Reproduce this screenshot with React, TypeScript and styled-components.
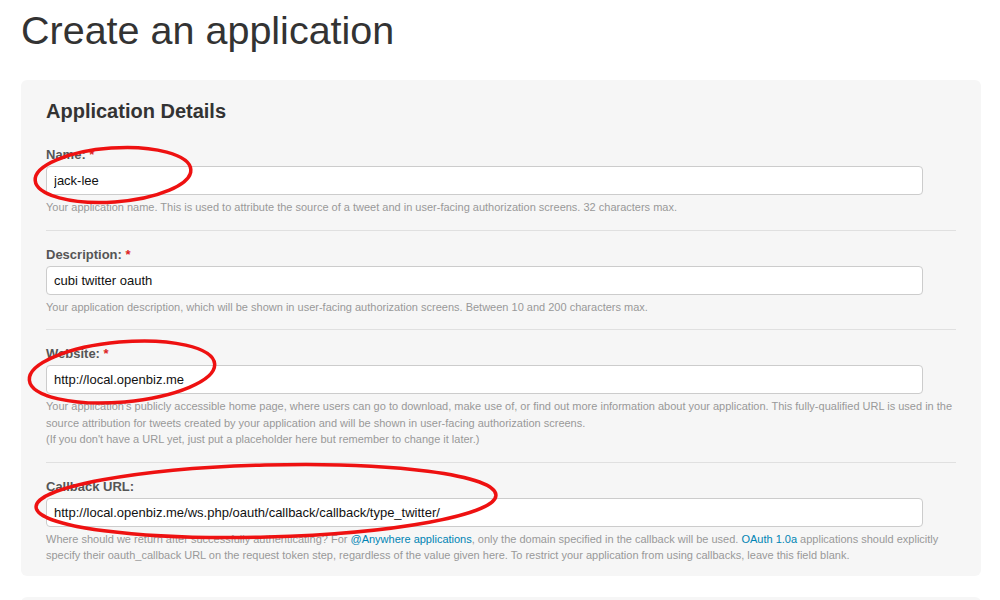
import styled, { createGlobalStyle } from "styled-components";

const GlobalStyle = createGlobalStyle`
  html, body {
    margin: 0;
    padding: 0;
    background: #ffffff;
    font-family: "Liberation Sans", Arial, sans-serif;
  }
`;

const Page = styled.div`
  position: relative;
  width: 1000px;
  height: 600px;
  overflow: hidden;
  padding: 0 19px 0 21px;
  box-sizing: border-box;
`;

const Title = styled.h1`
  margin: 8px 0 28px 0;
  font-size: 39.5px;
  line-height: 44px;
  font-weight: normal;
  color: #333333;
`;

const Panel = styled.div`
  background: #f6f6f6;
  border-radius: 6px;
  padding: 19px 25px 12px 25px;
  margin-bottom: 21px;
`;

const PanelTitle = styled.h2`
  margin: 0 0 23px 0;
  font-size: 20px;
  line-height: 24px;
  font-weight: bold;
  color: #333333;
`;

const Field = styled.div<{ $last?: boolean }>`
  padding-bottom: ${(p) => (p.$last ? "0" : "14px")};
  margin-bottom: ${(p) => (p.$last ? "0" : "15px")};
  border-bottom: ${(p) => (p.$last ? "none" : "1px solid #e0e0e0")};
`;

const Label = styled.label`
  display: block;
  margin-bottom: 2px;
  font-size: 13px;
  line-height: 18px;
  font-weight: bold;
  color: #555555;
`;

const Required = styled.span`
  color: #dd2222;
`;

const TextInput = styled.input`
  display: block;
  width: 877px;
  height: 29px;
  box-sizing: border-box;
  margin: 0;
  padding: 0 7px;
  border: 1px solid #cccccc;
  border-radius: 4px;
  background: #ffffff;
  font-family: "Liberation Sans", Arial, sans-serif;
  font-size: 13px;
  color: #111111;
  outline: none;
`;

const Help = styled.p`
  margin: 4px 0 0 0;
  font-size: 11px;
  line-height: 16.5px;
  color: #999999;
`;

const Link = styled.a`
  color: #0084b4;
  text-decoration: none;
`;

const NextPanel = styled.div`
  background: #f6f6f6;
  border-radius: 6px;
  height: 80px;
`;

const Annotations = styled.svg`
  position: absolute;
  left: 0;
  top: 0;
  width: 1000px;
  height: 600px;
  pointer-events: none;
`;

type Mark = { cx: number; cy: number; rx: number; ry: number; angle: number };

const marks: Mark[] = [
  { cx: 113, cy: 175, rx: 78, ry: 27, angle: -4 },
  { cx: 122, cy: 372, rx: 93, ry: 30, angle: -5 },
  { cx: 266, cy: 501, rx: 230, ry: 36, angle: -1.5 },
];

export default function App() {
  return (
    <Page>
      <GlobalStyle />
      <Title>Create an application</Title>
      <Panel>
        <PanelTitle>Application Details</PanelTitle>
        <Field>
          <Label>
            Name: <Required>*</Required>
          </Label>
          <TextInput defaultValue="jack-lee" />
          <Help>
            Your application name. This is used to attribute the source of a tweet and in user-facing
            authorization screens. 32 characters max.
          </Help>
        </Field>
        <Field>
          <Label>
            Description: <Required>*</Required>
          </Label>
          <TextInput defaultValue="cubi twitter oauth" />
          <Help>
            Your application description, which will be shown in user-facing authorization screens.
            Between 10 and 200 characters max.
          </Help>
        </Field>
        <Field>
          <Label>
            Website: <Required>*</Required>
          </Label>
          <TextInput defaultValue="http://local.openbiz.me" />
          <Help>
            Your application's publicly accessible home page, where users can go to download, make use
            of, or find out more information about your application. This fully-qualified URL is used in
            the source attribution for tweets created by your application and will be shown in
            user-facing authorization screens.
            <br />
            (If you don't have a URL yet, just put a placeholder here but remember to change it later.)
          </Help>
        </Field>
        <Field $last>
          <Label>Callback URL:</Label>
          <TextInput defaultValue="http://local.openbiz.me/ws.php/oauth/callback/callback/type_twitter/" />
          <Help>
            Where should we return after successfully authenticating? For{" "}
            <Link href="#">@Anywhere applications</Link>, only the domain specified in the callback will
            be used. <Link href="#">OAuth 1.0a</Link> applications should explicitly specify their
            oauth_callback URL on the request token step, regardless of the value given here. To
            restrict your application from using callbacks, leave this field blank.
          </Help>
        </Field>
      </Panel>
      <NextPanel />
      <Annotations viewBox="0 0 1000 600">
        {marks.map((m, i) => (
          <ellipse
            key={i}
            cx={m.cx}
            cy={m.cy}
            rx={m.rx}
            ry={m.ry}
            transform={`rotate(${m.angle} ${m.cx} ${m.cy})`}
            fill="none"
            stroke="#ee1111"
            strokeWidth={3.5}
          />
        ))}
      </Annotations>
    </Page>
  );
}
